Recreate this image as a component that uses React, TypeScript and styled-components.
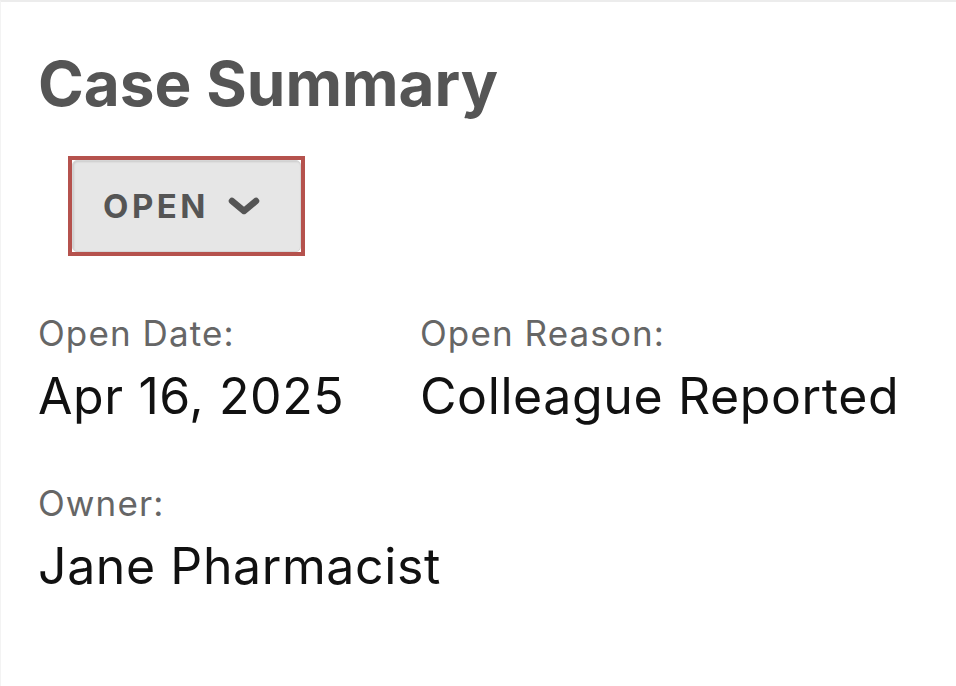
import styled, { createGlobalStyle } from 'styled-components';

const GlobalStyle = createGlobalStyle`
  html, body {
    margin: 0;
    padding: 0;
    background: #fff;
  }
  body {
    font-family: Inter, "Liberation Sans", sans-serif;
  }
`;

const Panel = styled.section`
  box-sizing: border-box;
  min-height: 686px;
  border-top: 2px solid #ececec;
  border-left: 1px solid #f3f3f3;
  padding: 0 37px;
`;

const Title = styled.h1`
  margin: 0;
  padding-top: 46px;
  font-size: 62px;
  line-height: 72px;
  font-weight: 700;
  color: #555;
`;

// square red focus ring around the rounded status button
const FocusRing = styled.div`
  display: flex;
  width: fit-content;
  margin: 36px 0 0 30px;
  border: 4px solid #b5524d;
`;

const StatusButton = styled.button`
  display: flex;
  align-items: center;
  gap: 18px;
  box-sizing: border-box;
  width: 229px;
  height: 92px;
  margin: 0;
  padding: 0 0 0 30px;
  background: #e6e6e6;
  border: 1px solid #d6d6d6;
  border-radius: 5px;
  box-shadow: inset 1px 1px 2px rgba(0, 0, 0, 0.12);
  font-family: inherit;
  font-size: 33px;
  font-weight: 700;
  letter-spacing: 3.5px;
  color: #555;
  cursor: pointer;
`;

const Fields = styled.div`
  display: grid;
  grid-template-columns: 382px auto;
  row-gap: 57px;
  margin-top: 57px;
`;

const Field = styled.div`
  display: flex;
  flex-direction: column;
  gap: 13px;
`;

const Label = styled.span`
  font-size: 35px;
  line-height: 40px;
  letter-spacing: 1.1px;
  color: #666;
`;

const Value = styled.span`
  font-size: 50px;
  line-height: 60px;
  letter-spacing: 0.6px;
  white-space: nowrap;
  color: #111;
`;

const Chevron = () => (
  <svg width="34" height="20" viewBox="0 0 34 20" aria-hidden="true">
    <polyline
      points="5,5 17,15 29,5"
      fill="none"
      stroke="#555"
      strokeWidth="6.5"
      strokeLinecap="round"
      strokeLinejoin="round"
    />
  </svg>
);

export default function App() {
  return (
    <>
      <GlobalStyle />
      <Panel>
        <Title>Case Summary</Title>
        <FocusRing>
          <StatusButton>
            OPEN
            <Chevron />
          </StatusButton>
        </FocusRing>
        <Fields>
          <Field>
            <Label>Open Date:</Label>
            <Value>Apr 16, 2025</Value>
          </Field>
          <Field>
            <Label>Open Reason:</Label>
            <Value>Colleague Reported</Value>
          </Field>
          <Field>
            <Label>Owner:</Label>
            <Value>Jane Pharmacist</Value>
          </Field>
        </Fields>
      </Panel>
    </>
  );
}
